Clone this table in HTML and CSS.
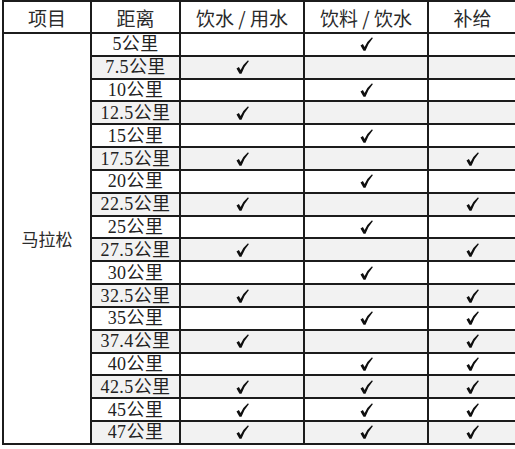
FILE: index.html
```html
<!DOCTYPE html>
<html lang="zh-CN">
<head>
<meta charset="utf-8">
<title>马拉松补给</title>
<link rel="stylesheet" href="styles.css">
</head>
<body>
<svg class="defs" width="0" height="0" aria-hidden="true">
  <symbol id="ck" viewBox="0 0 13 14">
    <path d="M0.5 8.6 L2.9 7.1 L4.6 9.9 Q7.3 4.1 12 0.3 L12.8 1.3 Q8.3 6.1 5.5 13.7 L3.5 13.7 Z"/>
  </symbol>
</svg>
<table class="sheet">
  <colgroup>
    <col class="c1"><col class="c2"><col class="c3"><col class="c4"><col class="c5">
  </colgroup>
  <thead>
    <tr class="head">
      <th>项目</th><th>距离</th><th>饮水 / 用水</th><th>饮料 / 饮水</th><th class="last">补给</th>
    </tr>
  </thead>
  <tbody>
    <tr><td class="event" rowspan="18">马拉松</td><td class="dist">5公里</td><td></td><td><svg class="ck"><use href="#ck"/></svg></td><td class="last"></td></tr>
    <tr class="alt"><td class="dist">7.5公里</td><td><svg class="ck"><use href="#ck"/></svg></td><td></td><td class="last"></td></tr>
    <tr><td class="dist">10公里</td><td></td><td><svg class="ck"><use href="#ck"/></svg></td><td class="last"></td></tr>
    <tr class="alt"><td class="dist">12.5公里</td><td><svg class="ck"><use href="#ck"/></svg></td><td></td><td class="last"></td></tr>
    <tr><td class="dist">15公里</td><td></td><td><svg class="ck"><use href="#ck"/></svg></td><td class="last"></td></tr>
    <tr class="alt"><td class="dist">17.5公里</td><td><svg class="ck"><use href="#ck"/></svg></td><td></td><td class="last"><svg class="ck"><use href="#ck"/></svg></td></tr>
    <tr><td class="dist">20公里</td><td></td><td><svg class="ck"><use href="#ck"/></svg></td><td class="last"></td></tr>
    <tr class="alt"><td class="dist">22.5公里</td><td><svg class="ck"><use href="#ck"/></svg></td><td></td><td class="last"><svg class="ck"><use href="#ck"/></svg></td></tr>
    <tr><td class="dist">25公里</td><td></td><td><svg class="ck"><use href="#ck"/></svg></td><td class="last"></td></tr>
    <tr class="alt"><td class="dist">27.5公里</td><td><svg class="ck"><use href="#ck"/></svg></td><td></td><td class="last"><svg class="ck"><use href="#ck"/></svg></td></tr>
    <tr><td class="dist">30公里</td><td></td><td><svg class="ck"><use href="#ck"/></svg></td><td class="last"></td></tr>
    <tr class="alt"><td class="dist">32.5公里</td><td><svg class="ck"><use href="#ck"/></svg></td><td></td><td class="last"><svg class="ck"><use href="#ck"/></svg></td></tr>
    <tr><td class="dist">35公里</td><td></td><td><svg class="ck"><use href="#ck"/></svg></td><td class="last"><svg class="ck"><use href="#ck"/></svg></td></tr>
    <tr class="alt"><td class="dist">37.4公里</td><td><svg class="ck"><use href="#ck"/></svg></td><td></td><td class="last"><svg class="ck"><use href="#ck"/></svg></td></tr>
    <tr><td class="dist">40公里</td><td></td><td><svg class="ck"><use href="#ck"/></svg></td><td class="last"><svg class="ck"><use href="#ck"/></svg></td></tr>
    <tr class="alt"><td class="dist">42.5公里</td><td><svg class="ck"><use href="#ck"/></svg></td><td><svg class="ck"><use href="#ck"/></svg></td><td class="last"><svg class="ck"><use href="#ck"/></svg></td></tr>
    <tr><td class="dist">45公里</td><td><svg class="ck"><use href="#ck"/></svg></td><td><svg class="ck"><use href="#ck"/></svg></td><td class="last"><svg class="ck"><use href="#ck"/></svg></td></tr>
    <tr class="alt"><td class="dist">47公里</td><td><svg class="ck"><use href="#ck"/></svg></td><td><svg class="ck"><use href="#ck"/></svg></td><td class="last"><svg class="ck"><use href="#ck"/></svg></td></tr>
  </tbody>
</table>
</body>
</html>
```

FILE: styles.css
```css
html, body {
  margin: 0;
  padding: 0;
  background: #ffffff;
  overflow: hidden;
}

.defs {
  position: absolute;
  width: 0;
  height: 0;
}

.sheet {
  margin: 0 0 0 2px;
  border-collapse: collapse;
  table-layout: fixed;
  width: 513px;
  font-family: "Noto Sans CJK SC", "Noto Sans", sans-serif;
  color: #262626;
}

.c1 { width: 88px; }
.c2 { width: 89px; }
.c3 { width: 124px; }
.c4 { width: 124px; }
.c5 { width: 88px; }

.sheet th,
.sheet td {
  border: 2px solid #1c1c1c;
  padding: 0;
  text-align: center;
  vertical-align: middle;
  line-height: 1;
}

.sheet .last {
  border-right: none;
}

.head th {
  height: 30px;
  font-size: 19px;
  font-weight: normal;
  color: #2b2b2b;
  background: #ffffff;
}

.sheet tbody tr {
  height: 22.83px;
  background: #ffffff;
}

.sheet tbody tr.alt {
  background: #f2f2f2;
}

.sheet .event {
  background: #ffffff;
  font-size: 17px;
  color: #2b2b2b;
}

.sheet .dist {
  font-family: "Liberation Serif", "Noto Sans CJK SC", serif;
  font-size: 18px;
  letter-spacing: 0.4px;
  color: #222222;
}

.ck {
  display: block;
  margin: 0 auto;
  width: 13px;
  height: 14px;
  fill: #0f0f0f;
}
```
